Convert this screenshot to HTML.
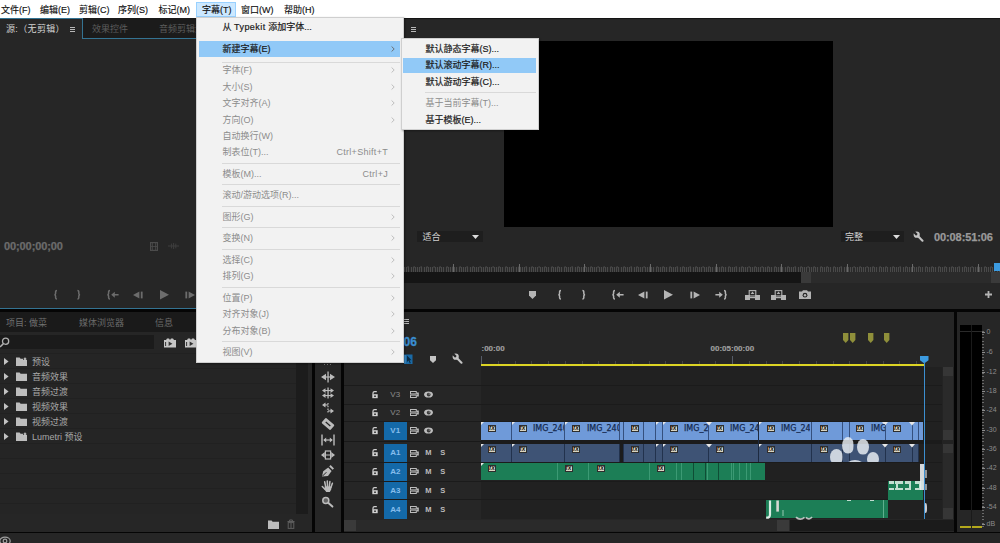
<!DOCTYPE html>
<html lang="zh-CN"><head><meta charset="utf-8"><title>Premiere</title>
<style>
html,body{margin:0;padding:0;background:#262626;}
body{width:1000px;height:543px;position:relative;overflow:hidden;font-family:"Liberation Sans","Noto Sans CJK SC",sans-serif;font-size:9px;color:#9d9d9d;}
.a{position:absolute}
.t{white-space:nowrap}
svg{position:absolute;overflow:visible}
</style></head><body>

<div class="a " style="left:0px;top:18px;width:1000px;height:525px;background:#262626;"></div>
<div class="a " style="left:0px;top:0px;width:1000px;height:18px;background:#ffffff;"></div>
<div class="a " style="left:196px;top:2px;width:40px;height:15px;background:#cce8ff;border:1px solid #99d1ff;box-sizing:border-box"></div>
<div class="a t" style="left:1px;top:4.0px;height:12px;line-height:12px;font-size:9px;color:#111;-webkit-text-stroke:0.15px #111">文件(F)</div>
<div class="a t" style="left:40px;top:4.0px;height:12px;line-height:12px;font-size:9px;color:#111;-webkit-text-stroke:0.15px #111">编辑(E)</div>
<div class="a t" style="left:79px;top:4.0px;height:12px;line-height:12px;font-size:9px;color:#111;-webkit-text-stroke:0.15px #111">剪辑(C)</div>
<div class="a t" style="left:118px;top:4.0px;height:12px;line-height:12px;font-size:9px;color:#111;-webkit-text-stroke:0.15px #111">序列(S)</div>
<div class="a t" style="left:158.5px;top:4.0px;height:12px;line-height:12px;font-size:9px;color:#111;-webkit-text-stroke:0.15px #111">标记(M)</div>
<div class="a t" style="left:202px;top:4.0px;height:12px;line-height:12px;font-size:9px;color:#111;-webkit-text-stroke:0.15px #111">字幕(T)</div>
<div class="a t" style="left:241px;top:4.0px;height:12px;line-height:12px;font-size:9px;color:#111;-webkit-text-stroke:0.15px #111">窗口(W)</div>
<div class="a t" style="left:284px;top:4.0px;height:12px;line-height:12px;font-size:9px;color:#111;-webkit-text-stroke:0.15px #111">帮助(H)</div>
<div class="a " style="left:82px;top:18px;width:322px;height:21px;background:#1b1b1b;"></div>
<div class="a " style="left:0px;top:18px;width:83px;height:1px;background:#347392;"></div>
<div class="a " style="left:82px;top:18px;width:1px;height:21px;background:#347392;"></div>
<div class="a " style="left:82px;top:38px;width:322px;height:1px;background:#347392;"></div>
<div class="a " style="left:0px;top:307.7px;width:404px;height:1.5px;background:#347392;"></div>
<div class="a t" style="left:6px;top:23.0px;height:12px;line-height:12px;font-size:9px;color:#d2d2d2;letter-spacing:0.35px">源:（无剪辑）</div>
<div class="a t" style="left:92px;top:23.0px;height:12px;line-height:12px;font-size:9px;color:#5c5c5c;">效果控件</div>
<div class="a t" style="left:159px;top:23.0px;height:12px;line-height:12px;font-size:9px;color:#5c5c5c;">音频剪辑混合器</div>
<div class="a t" style="left:4px;top:240.0px;height:12px;line-height:12px;font-size:11px;color:#6c6c6c;font-weight:bold;letter-spacing:-0.1px;-webkit-text-stroke:0.25px #6c6c6c">00;00;00;00</div>
<div class="a " style="left:404px;top:18px;width:596px;height:21px;background:#262626;"></div>
<div class="a " style="left:504px;top:41px;width:329px;height:186px;background:#000;"></div>
<div class="a " style="left:404px;top:18px;width:596px;height:1px;background:#141414;"></div>
<div class="a " style="left:417px;top:231px;width:66px;height:11px;background:#1e1e1e;"></div>
<div class="a t" style="left:422.5px;top:230.5px;height:12px;line-height:12px;font-size:9px;color:#d0d0d0;">适合</div>
<div class="a " style="left:841px;top:231px;width:63px;height:11px;background:#1e1e1e;"></div>
<div class="a t" style="left:845px;top:230.5px;height:12px;line-height:12px;font-size:9px;color:#d0d0d0;">完整</div>
<div class="a t" style="left:934px;top:230.5px;height:12px;line-height:12px;font-size:11px;color:#9a9a9a;font-weight:bold;letter-spacing:-0.1px;-webkit-text-stroke:0.25px #9a9a9a">00:08:51:06</div>
<div class="a " style="left:404px;top:271px;width:596px;height:12px;background:#151515;"></div>
<div class="a " style="left:803px;top:272px;width:197px;height:11px;background:#2b2b2b;"></div>
<div class="a " style="left:0px;top:309px;width:1000px;height:3px;background:#050505;"></div>
<div class="a " style="left:0px;top:312px;width:312px;height:220px;background:#262626;"></div>
<div class="a " style="left:0px;top:312px;width:312px;height:20px;background:#1a1a1a;"></div>
<div class="a t" style="left:6px;top:317.0px;height:12px;line-height:12px;font-size:9px;color:#707070;">项目: 做菜</div>
<div class="a t" style="left:79px;top:317.0px;height:12px;line-height:12px;font-size:9px;color:#6a6a6a;">媒体浏览器</div>
<div class="a t" style="left:155px;top:317.0px;height:12px;line-height:12px;font-size:9px;color:#6a6a6a;">信息</div>
<div class="a " style="left:0px;top:335px;width:154px;height:14px;background:#1b1b1b;"></div>
<div class="a " style="left:0px;top:350px;width:296px;height:164px;background:#252525;"></div>
<div class="a " style="left:0px;top:352.5px;width:296px;height:1px;background:#212121;"></div>
<div class="a " style="left:0px;top:367.5px;width:296px;height:1px;background:#212121;"></div>
<div class="a " style="left:0px;top:382.5px;width:296px;height:1px;background:#212121;"></div>
<div class="a " style="left:0px;top:397.5px;width:296px;height:1px;background:#212121;"></div>
<div class="a " style="left:0px;top:412.5px;width:296px;height:1px;background:#212121;"></div>
<div class="a " style="left:0px;top:427.5px;width:296px;height:1px;background:#212121;"></div>
<div class="a " style="left:0px;top:442.5px;width:296px;height:1px;background:#212121;"></div>
<div class="a " style="left:0px;top:457.5px;width:296px;height:1px;background:#212121;"></div>
<div class="a " style="left:0px;top:472.5px;width:296px;height:1px;background:#212121;"></div>
<div class="a " style="left:0px;top:487.5px;width:296px;height:1px;background:#212121;"></div>
<div class="a " style="left:0px;top:502.5px;width:296px;height:1px;background:#212121;"></div>
<div class="a " style="left:296px;top:350px;width:11.5px;height:164px;background:#1c1c1c;"></div>
<div class="a t" style="left:32px;top:356.0px;height:12px;line-height:12px;font-size:9px;color:#a8a8a8;">预设</div>
<div class="a t" style="left:32px;top:371.0px;height:12px;line-height:12px;font-size:9px;color:#a8a8a8;">音频效果</div>
<div class="a t" style="left:32px;top:386.0px;height:12px;line-height:12px;font-size:9px;color:#a8a8a8;">音频过渡</div>
<div class="a t" style="left:32px;top:401.0px;height:12px;line-height:12px;font-size:9px;color:#a8a8a8;">视频效果</div>
<div class="a t" style="left:32px;top:416.0px;height:12px;line-height:12px;font-size:9px;color:#a8a8a8;">视频过渡</div>
<div class="a t" style="left:32px;top:431.0px;height:12px;line-height:12px;font-size:9px;color:#a8a8a8;">Lumetri 预设</div>
<div class="a " style="left:312px;top:312px;width:3px;height:220px;background:#050505;"></div>
<div class="a " style="left:341px;top:312px;width:3px;height:220px;background:#050505;"></div>
<div class="a " style="left:954px;top:312px;width:3px;height:220px;background:#050505;"></div>
<div class="a " style="left:0px;top:532px;width:1000px;height:1px;background:#050505;"></div>
<div class="a " style="left:344px;top:312px;width:610px;height:220px;background:#262626;"></div>
<div class="a t" style="left:403.5px;top:336.0px;height:12px;line-height:12px;font-size:12px;color:#3a8dd0;font-weight:bold;-webkit-text-stroke:0.3px #3a8dd0">06</div>
<div class="a t" style="left:481.5px;top:343.3px;height:12px;line-height:12px;font-size:8px;color:#a0a0a0;font-weight:bold;-webkit-text-stroke:0.15px #a0a0a0">:00:00</div>
<div class="a t" style="left:710.5px;top:343.3px;height:12px;line-height:12px;font-size:8px;color:#a0a0a0;font-weight:bold;-webkit-text-stroke:0.15px #a0a0a0">00:05:00:00</div>
<div class="a " style="left:481px;top:364px;width:443px;height:2px;background:#dcd424;"></div>
<div class="a " style="left:957px;top:312px;width:43px;height:220px;background:#262626;"></div>
<div class="a " style="left:960px;top:325px;width:22px;height:185px;background:#000;"></div>
<div class="a " style="left:344px;top:367px;width:598px;height:152px;background:#1b1b1b;"></div>
<div class="a " style="left:344px;top:367px;width:137px;height:18px;background:#262626;"></div>
<div class="a " style="left:344px;top:439.5px;width:137px;height:4.5px;background:#262626;"></div>
<div class="a " style="left:344px;top:441px;width:137px;height:1.2px;background:#191919;"></div>
<div class="a " style="left:481px;top:367px;width:461px;height:18px;background:#212121;"></div>
<div class="a " style="left:344px;top:385.5px;width:137px;height:18.0px;background:#262626;"></div>
<div class="a " style="left:481px;top:385.5px;width:461px;height:18.0px;background:#212121;"></div>
<div class="a t" style="left:383.5px;top:388.8px;height:12px;line-height:12px;font-size:8px;color:#8c8c8c;width:23.5px;text-align:center;">V3</div>
<svg style="left:372px;top:390.8px" width="6" height="7.4" viewBox="0 0 6 7.4"><path d="M1 3.4 V1.9 Q1 0.7 2.6 0.7 H4.8" fill="none" stroke="#d0d0d0" stroke-width="1.2"/><rect x="0.3" y="3.2" width="5.4" height="4" fill="#d0d0d0"/><rect x="2" y="4.6" width="2" height="1.2" fill="#262626"/></svg>
<svg style="left:410px;top:391.0px" width="9" height="7" viewBox="0 0 9 7"><rect x="0.5" y="0.5" width="5.8" height="2.4" fill="none" stroke="#bcbcbc" stroke-width="1"/><rect x="0.5" y="4.1" width="5.8" height="2.4" fill="none" stroke="#bcbcbc" stroke-width="1"/><path d="M6.4 1.4 H8.8 V5.6 H6.4 L7.4 3.5 Z" fill="#bcbcbc"/></svg>
<svg style="left:424px;top:391.0px" width="9" height="7" viewBox="0 0 9 7"><ellipse cx="4.5" cy="3.5" rx="4.4" ry="3.1" fill="#bdbdbd"/><circle cx="4.7" cy="3.6" r="1.9" fill="#3a3a3a"/><circle cx="5.2" cy="3" r="0.7" fill="#9a9a9a"/></svg>
<div class="a " style="left:344px;top:404.5px;width:137px;height:16.5px;background:#262626;"></div>
<div class="a " style="left:481px;top:404.5px;width:461px;height:16.5px;background:#212121;"></div>
<div class="a t" style="left:383.5px;top:407.05px;height:12px;line-height:12px;font-size:8px;color:#8c8c8c;width:23.5px;text-align:center;">V2</div>
<svg style="left:372px;top:409.05px" width="6" height="7.4" viewBox="0 0 6 7.4"><path d="M1 3.4 V1.9 Q1 0.7 2.6 0.7 H4.8" fill="none" stroke="#d0d0d0" stroke-width="1.2"/><rect x="0.3" y="3.2" width="5.4" height="4" fill="#d0d0d0"/><rect x="2" y="4.6" width="2" height="1.2" fill="#262626"/></svg>
<svg style="left:410px;top:409.25px" width="9" height="7" viewBox="0 0 9 7"><rect x="0.5" y="0.5" width="5.8" height="2.4" fill="none" stroke="#bcbcbc" stroke-width="1"/><rect x="0.5" y="4.1" width="5.8" height="2.4" fill="none" stroke="#bcbcbc" stroke-width="1"/><path d="M6.4 1.4 H8.8 V5.6 H6.4 L7.4 3.5 Z" fill="#bcbcbc"/></svg>
<svg style="left:424px;top:409.25px" width="9" height="7" viewBox="0 0 9 7"><ellipse cx="4.5" cy="3.5" rx="4.4" ry="3.1" fill="#bdbdbd"/><circle cx="4.7" cy="3.6" r="1.9" fill="#3a3a3a"/><circle cx="5.2" cy="3" r="0.7" fill="#9a9a9a"/></svg>
<div class="a " style="left:344px;top:422px;width:137px;height:17.5px;background:#262626;"></div>
<div class="a " style="left:481px;top:422px;width:461px;height:17.5px;background:#212121;"></div>
<div class="a " style="left:383.5px;top:422px;width:23.5px;height:17.5px;background:#1469a8;"></div>
<div class="a t" style="left:383.5px;top:425.05px;height:12px;line-height:12px;font-size:8px;color:#86bdec;width:23.5px;text-align:center;font-weight:bold;">V1</div>
<svg style="left:372px;top:427.05px" width="6" height="7.4" viewBox="0 0 6 7.4"><path d="M1 3.4 V1.9 Q1 0.7 2.6 0.7 H4.8" fill="none" stroke="#d0d0d0" stroke-width="1.2"/><rect x="0.3" y="3.2" width="5.4" height="4" fill="#d0d0d0"/><rect x="2" y="4.6" width="2" height="1.2" fill="#262626"/></svg>
<svg style="left:410px;top:427.25px" width="9" height="7" viewBox="0 0 9 7"><rect x="0.5" y="0.5" width="5.8" height="2.4" fill="none" stroke="#bcbcbc" stroke-width="1"/><rect x="0.5" y="4.1" width="5.8" height="2.4" fill="none" stroke="#bcbcbc" stroke-width="1"/><path d="M6.4 1.4 H8.8 V5.6 H6.4 L7.4 3.5 Z" fill="#bcbcbc"/></svg>
<svg style="left:424px;top:427.25px" width="9" height="7" viewBox="0 0 9 7"><ellipse cx="4.5" cy="3.5" rx="4.4" ry="3.1" fill="#bdbdbd"/><circle cx="4.7" cy="3.6" r="1.9" fill="#3a3a3a"/><circle cx="5.2" cy="3" r="0.7" fill="#9a9a9a"/></svg>
<div class="a " style="left:344px;top:444px;width:137px;height:18px;background:#262626;"></div>
<div class="a " style="left:481px;top:444px;width:461px;height:18px;background:#212121;"></div>
<div class="a " style="left:383.5px;top:444px;width:23.5px;height:18px;background:#1469a8;"></div>
<div class="a t" style="left:383.5px;top:447.3px;height:12px;line-height:12px;font-size:8px;color:#86bdec;width:23.5px;text-align:center;font-weight:bold;">A1</div>
<svg style="left:372px;top:449.3px" width="6" height="7.4" viewBox="0 0 6 7.4"><path d="M1 3.4 V1.9 Q1 0.7 2.6 0.7 H4.8" fill="none" stroke="#d0d0d0" stroke-width="1.2"/><rect x="0.3" y="3.2" width="5.4" height="4" fill="#d0d0d0"/><rect x="2" y="4.6" width="2" height="1.2" fill="#262626"/></svg>
<svg style="left:410px;top:449.5px" width="9" height="7" viewBox="0 0 9 7"><rect x="0.5" y="0.5" width="5.8" height="2.4" fill="none" stroke="#bcbcbc" stroke-width="1"/><rect x="0.5" y="4.1" width="5.8" height="2.4" fill="none" stroke="#bcbcbc" stroke-width="1"/><path d="M6.4 1.4 H8.8 V5.6 H6.4 L7.4 3.5 Z" fill="#bcbcbc"/></svg>
<div class="a t" style="left:425.3px;top:447.3px;height:12px;line-height:12px;font-size:7.5px;color:#bcbcbc;font-weight:bold">M</div>
<div class="a t" style="left:440.2px;top:447.3px;height:12px;line-height:12px;font-size:7.5px;color:#bcbcbc;font-weight:bold">S</div>
<div class="a " style="left:344px;top:463px;width:137px;height:17.5px;background:#262626;"></div>
<div class="a " style="left:481px;top:463px;width:461px;height:17.5px;background:#212121;"></div>
<div class="a " style="left:383.5px;top:463px;width:23.5px;height:17.5px;background:#1469a8;"></div>
<div class="a t" style="left:383.5px;top:466.05px;height:12px;line-height:12px;font-size:8px;color:#86bdec;width:23.5px;text-align:center;font-weight:bold;">A2</div>
<svg style="left:372px;top:468.05px" width="6" height="7.4" viewBox="0 0 6 7.4"><path d="M1 3.4 V1.9 Q1 0.7 2.6 0.7 H4.8" fill="none" stroke="#d0d0d0" stroke-width="1.2"/><rect x="0.3" y="3.2" width="5.4" height="4" fill="#d0d0d0"/><rect x="2" y="4.6" width="2" height="1.2" fill="#262626"/></svg>
<svg style="left:410px;top:468.25px" width="9" height="7" viewBox="0 0 9 7"><rect x="0.5" y="0.5" width="5.8" height="2.4" fill="none" stroke="#bcbcbc" stroke-width="1"/><rect x="0.5" y="4.1" width="5.8" height="2.4" fill="none" stroke="#bcbcbc" stroke-width="1"/><path d="M6.4 1.4 H8.8 V5.6 H6.4 L7.4 3.5 Z" fill="#bcbcbc"/></svg>
<div class="a t" style="left:425.3px;top:466.05px;height:12px;line-height:12px;font-size:7.5px;color:#bcbcbc;font-weight:bold">M</div>
<div class="a t" style="left:440.2px;top:466.05px;height:12px;line-height:12px;font-size:7.5px;color:#bcbcbc;font-weight:bold">S</div>
<div class="a " style="left:344px;top:481.5px;width:137px;height:17.5px;background:#262626;"></div>
<div class="a " style="left:481px;top:481.5px;width:461px;height:17.5px;background:#212121;"></div>
<div class="a " style="left:383.5px;top:481.5px;width:23.5px;height:17.5px;background:#1469a8;"></div>
<div class="a t" style="left:383.5px;top:484.55px;height:12px;line-height:12px;font-size:8px;color:#86bdec;width:23.5px;text-align:center;font-weight:bold;">A3</div>
<svg style="left:372px;top:486.55px" width="6" height="7.4" viewBox="0 0 6 7.4"><path d="M1 3.4 V1.9 Q1 0.7 2.6 0.7 H4.8" fill="none" stroke="#d0d0d0" stroke-width="1.2"/><rect x="0.3" y="3.2" width="5.4" height="4" fill="#d0d0d0"/><rect x="2" y="4.6" width="2" height="1.2" fill="#262626"/></svg>
<svg style="left:410px;top:486.75px" width="9" height="7" viewBox="0 0 9 7"><rect x="0.5" y="0.5" width="5.8" height="2.4" fill="none" stroke="#bcbcbc" stroke-width="1"/><rect x="0.5" y="4.1" width="5.8" height="2.4" fill="none" stroke="#bcbcbc" stroke-width="1"/><path d="M6.4 1.4 H8.8 V5.6 H6.4 L7.4 3.5 Z" fill="#bcbcbc"/></svg>
<div class="a t" style="left:425.3px;top:484.55px;height:12px;line-height:12px;font-size:7.5px;color:#bcbcbc;font-weight:bold">M</div>
<div class="a t" style="left:440.2px;top:484.55px;height:12px;line-height:12px;font-size:7.5px;color:#bcbcbc;font-weight:bold">S</div>
<div class="a " style="left:344px;top:500px;width:137px;height:18.5px;background:#262626;"></div>
<div class="a " style="left:481px;top:500px;width:461px;height:18.5px;background:#212121;"></div>
<div class="a " style="left:383.5px;top:500px;width:23.5px;height:18.5px;background:#1469a8;"></div>
<div class="a t" style="left:383.5px;top:503.55px;height:12px;line-height:12px;font-size:8px;color:#86bdec;width:23.5px;text-align:center;font-weight:bold;">A4</div>
<svg style="left:372px;top:505.55px" width="6" height="7.4" viewBox="0 0 6 7.4"><path d="M1 3.4 V1.9 Q1 0.7 2.6 0.7 H4.8" fill="none" stroke="#d0d0d0" stroke-width="1.2"/><rect x="0.3" y="3.2" width="5.4" height="4" fill="#d0d0d0"/><rect x="2" y="4.6" width="2" height="1.2" fill="#262626"/></svg>
<svg style="left:410px;top:505.75px" width="9" height="7" viewBox="0 0 9 7"><rect x="0.5" y="0.5" width="5.8" height="2.4" fill="none" stroke="#bcbcbc" stroke-width="1"/><rect x="0.5" y="4.1" width="5.8" height="2.4" fill="none" stroke="#bcbcbc" stroke-width="1"/><path d="M6.4 1.4 H8.8 V5.6 H6.4 L7.4 3.5 Z" fill="#bcbcbc"/></svg>
<div class="a t" style="left:425.3px;top:503.55px;height:12px;line-height:12px;font-size:7.5px;color:#bcbcbc;font-weight:bold">M</div>
<div class="a t" style="left:440.2px;top:503.55px;height:12px;line-height:12px;font-size:7.5px;color:#bcbcbc;font-weight:bold">S</div>
<div class="a " style="left:404px;top:319px;width:5px;height:1px;background:#b8b8b8;"></div>
<div class="a " style="left:404px;top:321px;width:5px;height:1px;background:#b8b8b8;"></div>
<div class="a " style="left:404px;top:323px;width:5px;height:1px;background:#b8b8b8;"></div>
<svg style="left:404px;top:354px" width="9" height="11" viewBox="0 0 9 11"><rect x="0" y="0.5" width="8.5" height="9.5" fill="#1a6aa6"/><path d="M3 1.5 V8 L4.6 6.6 L5.8 9.4 L6.8 9 L5.6 6.3 H7.6 Z" fill="#0d2c44"/><path d="M1 1 V9.5" stroke="#5fb0ea" stroke-width="1"/></svg>
<svg style="left:430px;top:355.5px" width="6" height="7" viewBox="0 0 6 7"><path d="M0 0 H6 V4.2 L3 7 L0 4.2 Z" fill="#c4c4c4"/></svg>
<svg style="left:452px;top:353px" width="11" height="11" viewBox="0 0 11 11"><path d="M4.6 4.8 L9.5 9.7" stroke="#c4c4c4" stroke-width="2.1" stroke-linecap="round"/><circle cx="3.7" cy="3.7" r="3.1" fill="#c4c4c4"/><path d="M3.9 3.9 L-0.5 -0.5" stroke="#262626" stroke-width="2.3"/></svg>
<div class="a " style="left:481.0px;top:356px;width:1px;height:8px;background:#565c68;"></div>
<div class="a " style="left:497.5px;top:360.5px;width:1px;height:3.5px;background:#444444;"></div>
<div class="a " style="left:514.5px;top:360.5px;width:1px;height:3.5px;background:#444444;"></div>
<div class="a " style="left:531.0px;top:360.5px;width:1px;height:3.5px;background:#444444;"></div>
<div class="a " style="left:548.0px;top:360.5px;width:1px;height:3.5px;background:#444444;"></div>
<div class="a " style="left:564.5px;top:360.5px;width:1px;height:3.5px;background:#444444;"></div>
<div class="a " style="left:581.5px;top:360.5px;width:1px;height:3.5px;background:#444444;"></div>
<div class="a " style="left:598.0px;top:360.5px;width:1px;height:3.5px;background:#444444;"></div>
<div class="a " style="left:615.0px;top:360.5px;width:1px;height:3.5px;background:#444444;"></div>
<div class="a " style="left:631.5px;top:360.5px;width:1px;height:3.5px;background:#444444;"></div>
<div class="a " style="left:648.5px;top:360.5px;width:1px;height:3.5px;background:#444444;"></div>
<div class="a " style="left:665.0px;top:360.5px;width:1px;height:3.5px;background:#444444;"></div>
<div class="a " style="left:682.0px;top:360.5px;width:1px;height:3.5px;background:#444444;"></div>
<div class="a " style="left:698.5px;top:360.5px;width:1px;height:3.5px;background:#444444;"></div>
<div class="a " style="left:715.0px;top:360.5px;width:1px;height:3.5px;background:#444444;"></div>
<div class="a " style="left:732.0px;top:356px;width:1px;height:8px;background:#565c68;"></div>
<div class="a " style="left:748.5px;top:360.5px;width:1px;height:3.5px;background:#444444;"></div>
<div class="a " style="left:765.5px;top:360.5px;width:1px;height:3.5px;background:#444444;"></div>
<div class="a " style="left:782.0px;top:360.5px;width:1px;height:3.5px;background:#444444;"></div>
<div class="a " style="left:799.0px;top:360.5px;width:1px;height:3.5px;background:#444444;"></div>
<div class="a " style="left:815.5px;top:360.5px;width:1px;height:3.5px;background:#444444;"></div>
<div class="a " style="left:832.5px;top:360.5px;width:1px;height:3.5px;background:#444444;"></div>
<div class="a " style="left:849.0px;top:360.5px;width:1px;height:3.5px;background:#444444;"></div>
<div class="a " style="left:866.0px;top:360.5px;width:1px;height:3.5px;background:#444444;"></div>
<div class="a " style="left:882.5px;top:360.5px;width:1px;height:3.5px;background:#444444;"></div>
<div class="a " style="left:899.0px;top:360.5px;width:1px;height:3.5px;background:#444444;"></div>
<div class="a " style="left:916.0px;top:360.5px;width:1px;height:3.5px;background:#444444;"></div>
<svg style="left:843px;top:333px" width="5.4" height="10" viewBox="0 0 6 10" preserveAspectRatio="none"><path d="M0 0 H6 V7 L3 10 L0 7 Z" fill="#8f8f3a"/></svg>
<svg style="left:850px;top:333px" width="5.4" height="10" viewBox="0 0 6 10" preserveAspectRatio="none"><path d="M0 0 H6 V7 L3 10 L0 7 Z" fill="#8f8f3a"/></svg>
<svg style="left:868px;top:333px" width="5.4" height="10" viewBox="0 0 6 10" preserveAspectRatio="none"><path d="M0 0 H6 V7 L3 10 L0 7 Z" fill="#8f8f3a"/></svg>
<svg style="left:883.5px;top:333px" width="5.4" height="10" viewBox="0 0 6 10" preserveAspectRatio="none"><path d="M0 0 H6 V7 L3 10 L0 7 Z" fill="#8f8f3a"/></svg>
<div class="a " style="left:481px;top:422px;width:441.5px;height:18px;background:#6f9ad9;"></div>
<div class="a " style="left:481px;top:443.5px;width:437px;height:18.5px;background:#3e5375;"></div>
<div class="a " style="left:619.5px;top:443.5px;width:4.0px;height:18.5px;background:#1c1c1c;"></div>
<div class="a " style="left:510.8px;top:422px;width:1px;height:18px;background:#35507e;"></div>
<div class="a " style="left:510.8px;top:443.5px;width:1px;height:18.5px;background:#22324d;"></div>
<div class="a " style="left:564.3px;top:422px;width:1px;height:18px;background:#35507e;"></div>
<div class="a " style="left:564.3px;top:443.5px;width:1px;height:18.5px;background:#22324d;"></div>
<div class="a " style="left:618.9px;top:422px;width:1px;height:18px;background:#35507e;"></div>
<div class="a " style="left:618.9px;top:443.5px;width:1px;height:18.5px;background:#22324d;"></div>
<div class="a " style="left:623.0px;top:422px;width:1px;height:18px;background:#35507e;"></div>
<div class="a " style="left:623.0px;top:443.5px;width:1px;height:18.5px;background:#22324d;"></div>
<div class="a " style="left:643.0px;top:422px;width:1px;height:18px;background:#35507e;"></div>
<div class="a " style="left:643.0px;top:443.5px;width:1px;height:18.5px;background:#22324d;"></div>
<div class="a " style="left:654.9px;top:422px;width:1px;height:18px;background:#35507e;"></div>
<div class="a " style="left:654.9px;top:443.5px;width:1px;height:18.5px;background:#22324d;"></div>
<div class="a " style="left:662.0px;top:422px;width:1px;height:18px;background:#35507e;"></div>
<div class="a " style="left:662.0px;top:443.5px;width:1px;height:18.5px;background:#22324d;"></div>
<div class="a " style="left:708.0px;top:422px;width:1px;height:18px;background:#35507e;"></div>
<div class="a " style="left:708.0px;top:443.5px;width:1px;height:18.5px;background:#22324d;"></div>
<div class="a " style="left:758.3px;top:422px;width:1px;height:18px;background:#35507e;"></div>
<div class="a " style="left:758.3px;top:443.5px;width:1px;height:18.5px;background:#22324d;"></div>
<div class="a " style="left:811.4px;top:422px;width:1px;height:18px;background:#35507e;"></div>
<div class="a " style="left:811.4px;top:443.5px;width:1px;height:18.5px;background:#22324d;"></div>
<div class="a " style="left:842.3px;top:422px;width:1px;height:18px;background:#35507e;"></div>
<div class="a " style="left:842.3px;top:443.5px;width:1px;height:18.5px;background:#22324d;"></div>
<div class="a " style="left:849.3px;top:422px;width:1px;height:18px;background:#35507e;"></div>
<div class="a " style="left:849.3px;top:443.5px;width:1px;height:18.5px;background:#22324d;"></div>
<div class="a " style="left:884.9px;top:422px;width:1px;height:18px;background:#35507e;"></div>
<div class="a " style="left:884.9px;top:443.5px;width:1px;height:18.5px;background:#22324d;"></div>
<div class="a " style="left:911.5px;top:422px;width:1px;height:18px;background:#35507e;"></div>
<div class="a " style="left:911.5px;top:443.5px;width:1px;height:18.5px;background:#22324d;"></div>
<div class="a " style="left:917.5px;top:422px;width:1px;height:18px;background:#35507e;"></div>
<div class="a " style="left:917.5px;top:443.5px;width:1px;height:18.5px;background:#22324d;"></div>
<div class="a " style="left:758.3px;top:422px;width:1.2px;height:40px;background:#1d2a40;"></div>
<div class="a " style="left:481px;top:463px;width:284px;height:17px;background:#1c7e56;"></div>
<div class="a " style="left:557.0px;top:463px;width:1px;height:17px;background:#3c9a74;"></div>
<div class="a " style="left:588.0px;top:463px;width:1px;height:17px;background:#3c9a74;"></div>
<div class="a " style="left:648.9px;top:463px;width:1px;height:17px;background:#3c9a74;"></div>
<div class="a " style="left:675.5px;top:463px;width:1px;height:17px;background:#3c9a74;"></div>
<div class="a " style="left:680.5px;top:463px;width:1px;height:17px;background:#3c9a74;"></div>
<div class="a " style="left:692.5px;top:463px;width:1px;height:17px;background:#3c9a74;"></div>
<div class="a " style="left:705.1px;top:463px;width:1px;height:17px;background:#3c9a74;"></div>
<div class="a " style="left:707.0px;top:463px;width:1px;height:17px;background:#3c9a74;"></div>
<div class="a " style="left:717.5px;top:463px;width:1px;height:17px;background:#3c9a74;"></div>
<div class="a " style="left:730.5px;top:463px;width:1px;height:17px;background:#3c9a74;"></div>
<div class="a " style="left:733.0px;top:463px;width:1px;height:17px;background:#3c9a74;"></div>
<div class="a " style="left:738.5px;top:463px;width:1px;height:17px;background:#3c9a74;"></div>
<div class="a " style="left:745.5px;top:463px;width:1px;height:17px;background:#3c9a74;"></div>
<div class="a " style="left:749.5px;top:463px;width:1px;height:17px;background:#3c9a74;"></div>
<div class="a " style="left:692.5px;top:463px;width:1px;height:17px;background:#0f4d35;"></div>
<div class="a " style="left:705.1px;top:463px;width:1px;height:17px;background:#0f4d35;"></div>
<div class="a " style="left:717.5px;top:463px;width:1px;height:17px;background:#0f4d35;"></div>
<div class="a " style="left:887.5px;top:480.5px;width:35.5px;height:19.0px;background:#1c7e56;"></div>
<div class="a " style="left:765.5px;top:500px;width:122.5px;height:17.5px;background:#1c7e56;"></div>
<div class="a t" style="left:488px;top:424.5px;width:8px;height:7px;box-sizing:border-box;border:1px solid #2e2e2e;background:#d9d4c0;color:#1a1a1a;font-size:6.5px;line-height:4.5px;text-align:center;font-style:italic;font-weight:bold;overflow:hidden">fx</div>
<div class="a t" style="left:518.5px;top:424.5px;width:8px;height:7px;box-sizing:border-box;border:1px solid #2e2e2e;background:#d9d4c0;color:#1a1a1a;font-size:6.5px;line-height:4.5px;text-align:center;font-style:italic;font-weight:bold;overflow:hidden">fx</div>
<div class="a t" style="left:572px;top:424.5px;width:8px;height:7px;box-sizing:border-box;border:1px solid #2e2e2e;background:#d9d4c0;color:#1a1a1a;font-size:6.5px;line-height:4.5px;text-align:center;font-style:italic;font-weight:bold;overflow:hidden">fx</div>
<div class="a t" style="left:631px;top:424.5px;width:8px;height:7px;box-sizing:border-box;border:1px solid #2e2e2e;background:#d9d4c0;color:#1a1a1a;font-size:6.5px;line-height:4.5px;text-align:center;font-style:italic;font-weight:bold;overflow:hidden">fx</div>
<div class="a t" style="left:669.6px;top:424.5px;width:8px;height:7px;box-sizing:border-box;border:1px solid #2e2e2e;background:#d9d4c0;color:#1a1a1a;font-size:6.5px;line-height:4.5px;text-align:center;font-style:italic;font-weight:bold;overflow:hidden">fx</div>
<div class="a t" style="left:715.6px;top:424.5px;width:8px;height:7px;box-sizing:border-box;border:1px solid #2e2e2e;background:#d9d4c0;color:#1a1a1a;font-size:6.5px;line-height:4.5px;text-align:center;font-style:italic;font-weight:bold;overflow:hidden">fx</div>
<div class="a t" style="left:767px;top:424.5px;width:8px;height:7px;box-sizing:border-box;border:1px solid #2e2e2e;background:#d9d4c0;color:#1a1a1a;font-size:6.5px;line-height:4.5px;text-align:center;font-style:italic;font-weight:bold;overflow:hidden">fx</div>
<div class="a t" style="left:820px;top:424.5px;width:8px;height:7px;box-sizing:border-box;border:1px solid #2e2e2e;background:#d9d4c0;color:#1a1a1a;font-size:6.5px;line-height:4.5px;text-align:center;font-style:italic;font-weight:bold;overflow:hidden">fx</div>
<div class="a t" style="left:856px;top:424.5px;width:8px;height:7px;box-sizing:border-box;border:1px solid #2e2e2e;background:#d9d4c0;color:#1a1a1a;font-size:6.5px;line-height:4.5px;text-align:center;font-style:italic;font-weight:bold;overflow:hidden">fx</div>
<div class="a t" style="left:893px;top:424.5px;width:8px;height:7px;box-sizing:border-box;border:1px solid #2e2e2e;background:#d9d4c0;color:#1a1a1a;font-size:6.5px;line-height:4.5px;text-align:center;font-style:italic;font-weight:bold;overflow:hidden">fx</div>
<div class="a t" style="left:488px;top:445.5px;width:8px;height:7px;box-sizing:border-box;border:1px solid #2e2e2e;background:#d9d4c0;color:#1a1a1a;font-size:6.5px;line-height:4.5px;text-align:center;font-style:italic;font-weight:bold;overflow:hidden">fx</div>
<div class="a t" style="left:518.5px;top:445.5px;width:8px;height:7px;box-sizing:border-box;border:1px solid #2e2e2e;background:#d9d4c0;color:#1a1a1a;font-size:6.5px;line-height:4.5px;text-align:center;font-style:italic;font-weight:bold;overflow:hidden">fx</div>
<div class="a t" style="left:572px;top:445.5px;width:8px;height:7px;box-sizing:border-box;border:1px solid #2e2e2e;background:#d9d4c0;color:#1a1a1a;font-size:6.5px;line-height:4.5px;text-align:center;font-style:italic;font-weight:bold;overflow:hidden">fx</div>
<div class="a t" style="left:631px;top:445.5px;width:8px;height:7px;box-sizing:border-box;border:1px solid #2e2e2e;background:#d9d4c0;color:#1a1a1a;font-size:6.5px;line-height:4.5px;text-align:center;font-style:italic;font-weight:bold;overflow:hidden">fx</div>
<div class="a t" style="left:669.6px;top:445.5px;width:8px;height:7px;box-sizing:border-box;border:1px solid #2e2e2e;background:#d9d4c0;color:#1a1a1a;font-size:6.5px;line-height:4.5px;text-align:center;font-style:italic;font-weight:bold;overflow:hidden">fx</div>
<div class="a t" style="left:715.6px;top:445.5px;width:8px;height:7px;box-sizing:border-box;border:1px solid #2e2e2e;background:#d9d4c0;color:#1a1a1a;font-size:6.5px;line-height:4.5px;text-align:center;font-style:italic;font-weight:bold;overflow:hidden">fx</div>
<div class="a t" style="left:767px;top:445.5px;width:8px;height:7px;box-sizing:border-box;border:1px solid #2e2e2e;background:#d9d4c0;color:#1a1a1a;font-size:6.5px;line-height:4.5px;text-align:center;font-style:italic;font-weight:bold;overflow:hidden">fx</div>
<div class="a t" style="left:820px;top:445.5px;width:8px;height:7px;box-sizing:border-box;border:1px solid #2e2e2e;background:#d9d4c0;color:#1a1a1a;font-size:6.5px;line-height:4.5px;text-align:center;font-style:italic;font-weight:bold;overflow:hidden">fx</div>
<div class="a t" style="left:893px;top:445.5px;width:8px;height:7px;box-sizing:border-box;border:1px solid #2e2e2e;background:#d9d4c0;color:#1a1a1a;font-size:6.5px;line-height:4.5px;text-align:center;font-style:italic;font-weight:bold;overflow:hidden">fx</div>
<div class="a t" style="left:488px;top:465px;width:8px;height:7px;box-sizing:border-box;border:1px solid #2e2e2e;background:#d9d4c0;color:#1a1a1a;font-size:6.5px;line-height:4.5px;text-align:center;font-style:italic;font-weight:bold;overflow:hidden">fx</div>
<div class="a t" style="left:564.5px;top:465px;width:8px;height:7px;box-sizing:border-box;border:1px solid #2e2e2e;background:#d9d4c0;color:#1a1a1a;font-size:6.5px;line-height:4.5px;text-align:center;font-style:italic;font-weight:bold;overflow:hidden">fx</div>
<div class="a t" style="left:597px;top:465px;width:8px;height:7px;box-sizing:border-box;border:1px solid #2e2e2e;background:#d9d4c0;color:#1a1a1a;font-size:6.5px;line-height:4.5px;text-align:center;font-style:italic;font-weight:bold;overflow:hidden">fx</div>
<div class="a t" style="left:656.6px;top:465px;width:8px;height:7px;box-sizing:border-box;border:1px solid #2e2e2e;background:#d9d4c0;color:#1a1a1a;font-size:6.5px;line-height:4.5px;text-align:center;font-style:italic;font-weight:bold;overflow:hidden">fx</div>
<svg style="left:481px;top:422px" width="3" height="3" viewBox="0 0 3 3"><path d="M0 0 H3 L0 3 Z" fill="#e8e8e8"/></svg>
<svg style="left:511.5px;top:422px" width="3" height="3" viewBox="0 0 3 3"><path d="M0 0 H3 L0 3 Z" fill="#e8e8e8"/></svg>
<svg style="left:565px;top:422px" width="3" height="3" viewBox="0 0 3 3"><path d="M0 0 H3 L0 3 Z" fill="#e8e8e8"/></svg>
<svg style="left:655.5px;top:422px" width="3" height="3" viewBox="0 0 3 3"><path d="M0 0 H3 L0 3 Z" fill="#e8e8e8"/></svg>
<svg style="left:662.5px;top:422px" width="3" height="3" viewBox="0 0 3 3"><path d="M0 0 H3 L0 3 Z" fill="#e8e8e8"/></svg>
<svg style="left:759px;top:422px" width="3" height="3" viewBox="0 0 3 3"><path d="M0 0 H3 L0 3 Z" fill="#e8e8e8"/></svg>
<svg style="left:481px;top:443.5px" width="3" height="3" viewBox="0 0 3 3"><path d="M0 0 H3 L0 3 Z" fill="#e8e8e8"/></svg>
<svg style="left:511.5px;top:443.5px" width="3" height="3" viewBox="0 0 3 3"><path d="M0 0 H3 L0 3 Z" fill="#e8e8e8"/></svg>
<svg style="left:655.5px;top:443.5px" width="3" height="3" viewBox="0 0 3 3"><path d="M0 0 H3 L0 3 Z" fill="#e8e8e8"/></svg>
<svg style="left:662.5px;top:443.5px" width="3" height="3" viewBox="0 0 3 3"><path d="M0 0 H3 L0 3 Z" fill="#e8e8e8"/></svg>
<svg style="left:759px;top:443.5px" width="3" height="3" viewBox="0 0 3 3"><path d="M0 0 H3 L0 3 Z" fill="#e8e8e8"/></svg>
<svg style="left:481px;top:463px" width="3" height="3" viewBox="0 0 3 3"><path d="M0 0 H3 L0 3 Z" fill="#e8e8e8"/></svg>
<svg style="left:705.5px;top:422px" width="6" height="4" viewBox="0 0 6 4"><path d="M0 0 H6 L3 3.6 Z" fill="#e8e8e8"/></svg>
<svg style="left:705.5px;top:443.5px" width="6" height="4" viewBox="0 0 6 4"><path d="M0 0 H6 L3 3.6 Z" fill="#e8e8e8"/></svg>
<svg style="left:909px;top:422px" width="6" height="4" viewBox="0 0 6 4"><path d="M0 0 H6 L3 3.6 Z" fill="#e8e8e8"/></svg>
<svg style="left:909px;top:443.5px" width="6" height="4" viewBox="0 0 6 4"><path d="M0 0 H6 L3 3.6 Z" fill="#e8e8e8"/></svg>
<svg style="left:882.4px;top:422px" width="6" height="4" viewBox="0 0 6 4"><path d="M0 0 H6 L3 3.6 Z" fill="#e8e8e8"/></svg>
<svg style="left:882.4px;top:443.5px" width="6" height="4" viewBox="0 0 6 4"><path d="M0 0 H6 L3 3.6 Z" fill="#e8e8e8"/></svg>
<div class="a t" style="left:533px;top:424.3px;width:31px;height:10px;line-height:10px;font-size:8px;-webkit-text-stroke:0.25px #15294f;color:#15294f;font-family:'DejaVu Sans','Liberation Sans',sans-serif;overflow:hidden;">IMG_2407</div>
<div class="a t" style="left:587px;top:424.3px;width:32px;height:10px;line-height:10px;font-size:8px;-webkit-text-stroke:0.25px #15294f;color:#15294f;font-family:'DejaVu Sans','Liberation Sans',sans-serif;overflow:hidden;">IMG_2408</div>
<div class="a t" style="left:684px;top:424.3px;width:24px;height:10px;line-height:10px;font-size:8px;-webkit-text-stroke:0.25px #15294f;color:#15294f;font-family:'DejaVu Sans','Liberation Sans',sans-serif;overflow:hidden;">IMG_2410</div>
<div class="a t" style="left:730px;top:424.3px;width:28px;height:10px;line-height:10px;font-size:8px;-webkit-text-stroke:0.25px #15294f;color:#15294f;font-family:'DejaVu Sans','Liberation Sans',sans-serif;overflow:hidden;">IMG_2411</div>
<div class="a t" style="left:781px;top:424.3px;width:29px;height:10px;line-height:10px;font-size:8px;-webkit-text-stroke:0.25px #15294f;color:#15294f;font-family:'DejaVu Sans','Liberation Sans',sans-serif;overflow:hidden;">IMG_2412</div>
<div class="a t" style="left:871px;top:424.3px;width:14px;height:10px;line-height:10px;font-size:8px;-webkit-text-stroke:0.25px #15294f;color:#15294f;font-family:'DejaVu Sans','Liberation Sans',sans-serif;overflow:hidden;">IMG_2415</div>
<div class="a" style="left:841.5px;top:436.5px;width:12px;height:17.0px;border-radius:50%;background:rgba(235,240,245,.82);clip-path:inset(0 0 0px 0)"></div>
<div class="a" style="left:857px;top:438.5px;width:12px;height:16px;border-radius:50%;background:rgba(235,240,245,.82);clip-path:inset(0 0 0px 0)"></div>
<div class="a" style="left:829.5px;top:449px;width:13.0px;height:16px;border-radius:50%;background:rgba(235,240,245,.82);clip-path:inset(0 0 3px 0)"></div>
<div class="a" style="left:867px;top:452px;width:12px;height:14px;border-radius:50%;background:rgba(235,240,245,.82);clip-path:inset(0 0 4px 0)"></div>
<div class="a" style="left:845.5px;top:460px;width:18px;height:12px;border-radius:50%;background:rgba(235,240,245,.82);clip-path:inset(0 0 10px 0)"></div>
<div class="a " style="left:888.6px;top:481.4px;width:5.199999999999932px;height:2.6px;background:rgba(225,240,232,.85);"></div>
<div class="a " style="left:888.6px;top:487.9px;width:5.199999999999932px;height:2.6px;background:rgba(225,240,232,.85);"></div>
<div class="a " style="left:895.4px;top:481.4px;width:7.600000000000023px;height:2.6px;background:rgba(225,240,232,.85);"></div>
<div class="a " style="left:895.4px;top:487.9px;width:7.600000000000023px;height:2.6px;background:rgba(225,240,232,.85);"></div>
<div class="a " style="left:905px;top:481.4px;width:6px;height:2.6px;background:rgba(225,240,232,.85);"></div>
<div class="a " style="left:905px;top:487.9px;width:6px;height:2.6px;background:rgba(225,240,232,.85);"></div>
<div class="a " style="left:914.8px;top:481.4px;width:5.800000000000068px;height:2.6px;background:rgba(225,240,232,.85);"></div>
<div class="a " style="left:914.8px;top:487.9px;width:5.800000000000068px;height:2.6px;background:rgba(225,240,232,.85);"></div>
<div class="a " style="left:896px;top:483.5px;width:2px;height:4.5px;background:rgba(225,240,232,.85);"></div>
<div class="a " style="left:909px;top:483.5px;width:2px;height:4.5px;background:rgba(225,240,232,.85);"></div>
<div class="a " style="left:918.5px;top:483.5px;width:2px;height:4.5px;background:rgba(225,240,232,.85);"></div>
<div class="a " style="left:920px;top:463.5px;width:4px;height:26.5px;background:rgba(232,236,240,.9);"></div>
<div class="a " style="left:925px;top:470px;width:1.5px;height:8px;background:rgba(220,225,230,.6);"></div>
<div class="a " style="left:925px;top:484px;width:1.5px;height:6px;background:rgba(220,225,230,.6);"></div>
<div class="a " style="left:882.6px;top:500px;width:1px;height:17.5px;background:#5fb08e;"></div>
<svg style="left:765px;top:500px" width="50" height="21" viewBox="0 0 50 21"><path d="M5 0.5 V14.5 Q5 18 1.2 17.6" fill="none" stroke="rgba(235,245,240,.92)" stroke-width="2.2"/><path d="M12.6 0.5 V11.6" stroke="rgba(235,225,225,.9)" stroke-width="2.6"/><path d="M18 10 V16" stroke="rgba(200,230,215,.45)" stroke-width="1.6"/><path d="M31 17.2 Q35 21 39.5 17.4 M41 17.4 Q44 20.6 47 17" fill="none" stroke="rgba(225,225,225,.8)" stroke-width="1.8"/></svg>
<div class="a " style="left:847px;top:499.5px;width:4px;height:1.6px;background:rgba(235,245,240,.8);"></div>
<div class="a " style="left:870px;top:499.5px;width:4px;height:1.6px;background:rgba(235,245,240,.8);"></div>
<div class="a" style="left:923.5px;top:503px;width:3.5px;height:10px;border-radius:50%;background:rgba(235,235,240,.85)"></div>
<svg style="left:920px;top:355.5px" width="9" height="8" viewBox="0 0 9 8"><path d="M0 0 H8.5 V4.2 L4.25 7.5 L0 4.2 Z" fill="#3c9be0"/></svg>
<div class="a " style="left:924px;top:362px;width:1px;height:157px;background:#3c8fd0;"></div>
<div class="a " style="left:942px;top:367px;width:12px;height:152px;background:#232323;"></div>
<div class="a " style="left:943px;top:367px;width:9.5px;height:73px;background:#2a2a2a;"></div>
<div class="a " style="left:943px;top:443.5px;width:9.5px;height:75.5px;background:#2a2a2a;"></div>
<div class="a " style="left:943px;top:367px;width:9.5px;height:9px;background:#363636;"></div>
<div class="a " style="left:943px;top:430px;width:9.5px;height:10px;background:#363636;"></div>
<div class="a " style="left:943px;top:443.5px;width:9.5px;height:9.5px;background:#363636;"></div>
<div class="a " style="left:943px;top:508px;width:9.5px;height:11px;background:#363636;"></div>
<div class="a " style="left:344px;top:520px;width:610px;height:11px;background:#1b1b1b;"></div>
<div class="a " style="left:344px;top:520px;width:446px;height:11px;background:#2a2a2a;"></div>
<div class="a " style="left:344px;top:520px;width:12px;height:11px;background:#3a3a3a;"></div>
<div class="a " style="left:777px;top:520px;width:12px;height:11px;background:#3a3a3a;"></div>
<div class="a " style="left:315px;top:312px;width:26px;height:220px;background:#262626;"></div>
<svg style="left:320.5px;top:371.0px" width="14" height="12" viewBox="0 0 14 12"><path d="M0 6 L5 2.8 V9.2 Z M14 6 L9 2.8 V9.2 Z" fill="#bcbcbc"/><rect x="6.4" y="0.5" width="1.3" height="11" fill="#bcbcbc"/><rect x="3" y="5.4" width="8" height="1.2" fill="#bcbcbc"/></svg>
<svg style="left:320.5px;top:386.5px" width="14" height="12" viewBox="0 0 14 12"><path d="M1 3.6 L4.5 1.2 V6 Z M13 3.6 L9.5 1.2 V6 Z M1 8.6 L4.5 6.2 V11 Z M13 8.6 L9.5 6.2 V11 Z" fill="#bcbcbc"/><rect x="6.4" y="0.5" width="1.3" height="11" fill="#bcbcbc"/><rect x="3" y="3" width="8" height="1.1" fill="#bcbcbc"/><rect x="3" y="8" width="8" height="1.1" fill="#bcbcbc"/></svg>
<svg style="left:320.5px;top:402.0px" width="14" height="12" viewBox="0 0 14 12"><path d="M1 3 L4.5 0.6 V5.4 Z M13 9 L9.5 6.6 V11.4 Z" fill="#bcbcbc"/><rect x="4" y="2.4" width="3" height="1.1" fill="#bcbcbc"/><rect x="7" y="8.4" width="3" height="1.1" fill="#bcbcbc"/><path d="M7 1 V11" stroke="#bcbcbc" stroke-width="1.2" stroke-dasharray="1.5 1.2"/></svg>
<svg style="left:320.5px;top:418.0px" width="14" height="12" viewBox="0 0 14 12"><g transform="rotate(40 7 6)"><rect x="1.2" y="2.6" width="11.6" height="6.8" rx="1" fill="#bcbcbc"/><rect x="4" y="5.3" width="6" height="1.3" fill="#262626"/></g></svg>
<svg style="left:320.5px;top:433.5px" width="14" height="12" viewBox="0 0 14 12"><rect x="0.3" y="0.5" width="1.4" height="11" fill="#bcbcbc"/><rect x="12.3" y="0.5" width="1.4" height="11" fill="#bcbcbc"/><rect x="3" y="5.4" width="8" height="1.2" fill="#bcbcbc"/><path d="M2.2 6 L5.2 3.6 V8.4 Z M11.8 6 L8.8 3.6 V8.4 Z" fill="#bcbcbc"/></svg>
<svg style="left:320.5px;top:449.0px" width="14" height="12" viewBox="0 0 14 12"><rect x="4.4" y="2" width="5.2" height="8" fill="none" stroke="#bcbcbc" stroke-width="1.2"/><rect x="4.4" y="5.5" width="5.2" height="1" fill="#bcbcbc"/><path d="M0 6 L3.8 3 V9 Z M14 6 L10.2 3 V9 Z" fill="#bcbcbc"/></svg>
<svg style="left:320.5px;top:464.5px" width="14" height="12" viewBox="0 0 14 12"><path d="M1 11.5 L2.2 6.2 L7.2 2.6 L10.6 6 L7 11 Z" fill="#bcbcbc"/><path d="M8.2 1.4 L9.6 0 L13 3.4 L11.6 4.8 Z" fill="#bcbcbc"/><path d="M1.4 11.2 L5.4 7.2" stroke="#262626" stroke-width="1"/></svg>
<svg style="left:320.5px;top:480.0px" width="14" height="12" viewBox="0 0 14 12"><g stroke="#bcbcbc" stroke-width="1.5" stroke-linecap="round"><path d="M4.7 7 L3.7 1.8"/><path d="M6.5 6.5 L6.3 0.9"/><path d="M8.3 6.8 L8.9 1.5"/><path d="M9.9 7.6 L11.4 3.2"/><path d="M4.2 9.6 L1.3 6.6"/></g><path d="M3.8 6.2 L10.6 6.4 L10.2 9.6 L8.8 12 H5.2 L3.6 9.6 Z" fill="#bcbcbc"/></svg>
<svg style="left:320.5px;top:495.5px" width="14" height="12" viewBox="0 0 14 12"><circle cx="4.8" cy="4.4" r="3" fill="#666" stroke="#bcbcbc" stroke-width="1.5"/><path d="M7.4 7 L11.4 10.6" stroke="#bcbcbc" stroke-width="2" stroke-linecap="round"/></svg>
<div class="a " style="left:324px;top:364px;width:1px;height:1px;background:#7a7a7a;"></div>
<div class="a " style="left:327px;top:364px;width:1px;height:1px;background:#7a7a7a;"></div>
<div class="a " style="left:330px;top:364px;width:1px;height:1px;background:#7a7a7a;"></div>
<div class="a " style="left:960px;top:330.5px;width:22px;height:1px;background:#2a2a2a;"></div>
<div class="a " style="left:971px;top:325px;width:1px;height:201px;background:#1a1a1a;"></div>
<div class="a " style="left:960px;top:526px;width:10.5px;height:2px;background:#b3a81c;"></div>
<div class="a " style="left:972px;top:526px;width:10px;height:2px;background:#b3a81c;"></div>
<div class="a" style="left:982px;top:331px;width:2px;height:196px;background:repeating-linear-gradient(to bottom,#6a6a6a 0,#6a6a6a 1px,transparent 1px,transparent 3.25px)"></div>
<div class="a " style="left:982px;top:332px;width:3px;height:1px;background:#8c8c8c;"></div>
<div class="a t" style="left:986.5px;top:326.0px;height:12px;line-height:12px;font-size:7px;color:#8c8c8c;">0</div>
<div class="a " style="left:982px;top:352px;width:3px;height:1px;background:#8c8c8c;"></div>
<div class="a t" style="left:986.5px;top:346.0px;height:12px;line-height:12px;font-size:7px;color:#8c8c8c;">-6</div>
<div class="a " style="left:982px;top:371.5px;width:3px;height:1px;background:#8c8c8c;"></div>
<div class="a t" style="left:986.5px;top:365.5px;height:12px;line-height:12px;font-size:7px;color:#8c8c8c;">-12</div>
<div class="a " style="left:982px;top:391px;width:3px;height:1px;background:#8c8c8c;"></div>
<div class="a t" style="left:986.5px;top:385.0px;height:12px;line-height:12px;font-size:7px;color:#8c8c8c;">-18</div>
<div class="a " style="left:982px;top:410px;width:3px;height:1px;background:#8c8c8c;"></div>
<div class="a t" style="left:986.5px;top:404.0px;height:12px;line-height:12px;font-size:7px;color:#8c8c8c;">-24</div>
<div class="a " style="left:982px;top:429.5px;width:3px;height:1px;background:#8c8c8c;"></div>
<div class="a t" style="left:986.5px;top:423.5px;height:12px;line-height:12px;font-size:7px;color:#8c8c8c;">-30</div>
<div class="a " style="left:982px;top:449px;width:3px;height:1px;background:#8c8c8c;"></div>
<div class="a t" style="left:986.5px;top:443.0px;height:12px;line-height:12px;font-size:7px;color:#8c8c8c;">-36</div>
<div class="a " style="left:982px;top:468px;width:3px;height:1px;background:#8c8c8c;"></div>
<div class="a t" style="left:986.5px;top:462.0px;height:12px;line-height:12px;font-size:7px;color:#8c8c8c;">-42</div>
<div class="a " style="left:982px;top:487.5px;width:3px;height:1px;background:#8c8c8c;"></div>
<div class="a t" style="left:986.5px;top:481.5px;height:12px;line-height:12px;font-size:7px;color:#8c8c8c;">-48</div>
<div class="a " style="left:982px;top:507px;width:3px;height:1px;background:#8c8c8c;"></div>
<div class="a t" style="left:986.5px;top:501.0px;height:12px;line-height:12px;font-size:7px;color:#8c8c8c;">-54</div>
<div class="a " style="left:982px;top:524px;width:3px;height:1px;background:#8c8c8c;"></div>
<div class="a t" style="left:986.5px;top:518.0px;height:12px;line-height:12px;font-size:7px;color:#8c8c8c;">dB</div>
<svg style="left:0px;top:337px" width="10" height="11" viewBox="0 0 10 11"><circle cx="5.6" cy="4.2" r="3.1" fill="none" stroke="#b0b0b0" stroke-width="1.3"/><path d="M3.4 6.6 L0 10" stroke="#b0b0b0" stroke-width="1.5"/></svg>
<svg style="left:164px;top:337.5px" width="12" height="9.5" viewBox="0 0 12 9.5"><path d="M0 2 H2 L3 0.6 H5 L6 2 H6 L7 0.6 H9 L10 2 H12 V9.5 H0 Z" fill="#c6c6c6"/><path d="M4.6 3.6 L8.4 5.8 L4.6 8 Z" fill="#333"/><path d="M1.6 4 V8" stroke="#333" stroke-width="1"/></svg>
<svg style="left:185px;top:337.5px" width="12" height="9.5" viewBox="0 0 12 9.5"><path d="M0 2 H2 L3 0.6 H5 L6 2 H6 L7 0.6 H9 L10 2 H12 V9.5 H0 Z" fill="#c6c6c6"/><path d="M4.6 3.6 L8.4 5.8 L4.6 8 Z" fill="#333"/><path d="M1.6 4 V8" stroke="#333" stroke-width="1"/></svg>
<svg style="left:4px;top:357.5px" width="5" height="7" viewBox="0 0 5 7"><path d="M0 0 L4.6 3.5 L0 7 Z" fill="#c2c2c2"/></svg>
<svg style="left:16px;top:356.5px" width="11" height="9" viewBox="0 0 11 9"><path d="M0 0.6 H3.6 L4.6 1.8 H7 V9 H0 Z" fill="#bdbdbd"/><path d="M0 3 H11 V9 H0 Z" fill="#bdbdbd"/><path d="M9 0 L9.7 1.6 L11 2 L9.7 2.6 L9 4.2 L8.3 2.6 L7 2 L8.3 1.6 Z" fill="#d8d8d8"/></svg>
<svg style="left:4px;top:372.5px" width="5" height="7" viewBox="0 0 5 7"><path d="M0 0 L4.6 3.5 L0 7 Z" fill="#c2c2c2"/></svg>
<svg style="left:16px;top:371.5px" width="11" height="9" viewBox="0 0 11 9"><path d="M0 0.6 H3.6 L4.6 1.8 H11 V9 H0 Z" fill="#bdbdbd"/><path d="M0 3 H11 V9 H0 Z" fill="#bdbdbd"/></svg>
<svg style="left:4px;top:387.5px" width="5" height="7" viewBox="0 0 5 7"><path d="M0 0 L4.6 3.5 L0 7 Z" fill="#c2c2c2"/></svg>
<svg style="left:16px;top:386.5px" width="11" height="9" viewBox="0 0 11 9"><path d="M0 0.6 H3.6 L4.6 1.8 H11 V9 H0 Z" fill="#bdbdbd"/><path d="M0 3 H11 V9 H0 Z" fill="#bdbdbd"/></svg>
<svg style="left:4px;top:402.5px" width="5" height="7" viewBox="0 0 5 7"><path d="M0 0 L4.6 3.5 L0 7 Z" fill="#c2c2c2"/></svg>
<svg style="left:16px;top:401.5px" width="11" height="9" viewBox="0 0 11 9"><path d="M0 0.6 H3.6 L4.6 1.8 H11 V9 H0 Z" fill="#bdbdbd"/><path d="M0 3 H11 V9 H0 Z" fill="#bdbdbd"/></svg>
<svg style="left:4px;top:417.5px" width="5" height="7" viewBox="0 0 5 7"><path d="M0 0 L4.6 3.5 L0 7 Z" fill="#c2c2c2"/></svg>
<svg style="left:16px;top:416.5px" width="11" height="9" viewBox="0 0 11 9"><path d="M0 0.6 H3.6 L4.6 1.8 H11 V9 H0 Z" fill="#bdbdbd"/><path d="M0 3 H11 V9 H0 Z" fill="#bdbdbd"/></svg>
<svg style="left:4px;top:432.5px" width="5" height="7" viewBox="0 0 5 7"><path d="M0 0 L4.6 3.5 L0 7 Z" fill="#c2c2c2"/></svg>
<svg style="left:16px;top:431.5px" width="11" height="9" viewBox="0 0 11 9"><path d="M0 0.6 H3.6 L4.6 1.8 H7 V9 H0 Z" fill="#bdbdbd"/><path d="M0 3 H11 V9 H0 Z" fill="#bdbdbd"/><path d="M9 0 L9.7 1.6 L11 2 L9.7 2.6 L9 4.2 L8.3 2.6 L7 2 L8.3 1.6 Z" fill="#d8d8d8"/></svg>
<svg style="left:268px;top:519.5px" width="11" height="9" viewBox="0 0 11 9"><path d="M0 0.6 H3.6 L4.6 1.8 H11 V9 H0 Z" fill="#bdbdbd"/><path d="M0 3 H11 V9 H0 Z" fill="#bdbdbd"/></svg>
<svg style="left:287px;top:518.5px" width="8" height="10" viewBox="0 0 8 10"><path d="M0.5 2.5 H7.5 M2.6 2.3 V1 H5.4 V2.3" fill="none" stroke="#5e5e5e" stroke-width="1"/><rect x="1.2" y="3.6" width="5.6" height="5.8" fill="none" stroke="#5e5e5e" stroke-width="1"/><path d="M4 4 V9" stroke="#5e5e5e" stroke-width="1"/></svg>
<svg style="left:-1.5px;top:536px" width="12" height="9" viewBox="0 0 12 9"><ellipse cx="6" cy="5" rx="5.2" ry="3.8" fill="none" stroke="#a0a0a0" stroke-width="1.2"/><circle cx="6" cy="5" r="1.8" fill="none" stroke="#a0a0a0" stroke-width="1.2"/></svg>
<svg style="left:53.5px;top:290.05px" width="3.4" height="9.5" viewBox="0 0 3.4 9.5"><path d="M3 0.5 Q1.6 0.5 1.6 1.8 V3.6 Q1.6 4.6 0.4 4.75 Q1.6 4.9 1.6 5.9 V7.7 Q1.6 9 3 9" fill="none" stroke="#6c6c6c" stroke-width="1.5"/></svg>
<svg style="left:77.1px;top:290.05px" width="3.4" height="9.5" viewBox="0 0 3.4 9.5"><path d="M3 0.5 Q1.6 0.5 1.6 1.8 V3.6 Q1.6 4.6 0.4 4.75 Q1.6 4.9 1.6 5.9 V7.7 Q1.6 9 3 9" transform="translate(3.4 0) scale(-1 1)" fill="none" stroke="#6c6c6c" stroke-width="1.5"/></svg>
<svg style="left:106.7px;top:290.05px" width="12" height="9.5" viewBox="0 0 12 9.5"><path d="M3 0.5 Q1.6 0.5 1.6 1.8 V3.6 Q1.6 4.6 0.4 4.75 Q1.6 4.9 1.6 5.9 V7.7 Q1.6 9 3 9" fill="none" stroke="#6c6c6c" stroke-width="1.5"/><path d="M4.2 4.75 L7.8 1.8 V3.9 H11.6 V5.6 H7.8 V7.7 Z" fill="#6c6c6c"/></svg>
<svg style="left:133.3px;top:290.8px" width="10" height="8" viewBox="0 0 10 8"><path d="M0 4 L6.4 0.4 V7.6 Z" fill="#6c6c6c"/><rect x="7.8" y="0.6" width="1.8" height="6.8" fill="#6c6c6c"/></svg>
<svg style="left:159.9px;top:290.05px" width="9" height="9.5" viewBox="0 0 9 9.5"><path d="M0 0 L9 4.75 L0 9.5 Z" fill="#6c6c6c"/></svg>
<svg style="left:185.3px;top:290.8px" width="10" height="8" viewBox="0 0 10 8"><path d="M10 4 L3.6 0.4 V7.6 Z" fill="#6c6c6c"/><rect x="0.4" y="0.6" width="1.8" height="6.8" fill="#6c6c6c"/></svg>
<svg style="left:529.0px;top:290.8px" width="7" height="8" viewBox="0 0 7 8"><path d="M0 0 H7 V4.6 L3.5 8 L0 4.6 Z" fill="#b4b4b4"/></svg>
<svg style="left:558.3px;top:290.05px" width="3.4" height="9.5" viewBox="0 0 3.4 9.5"><path d="M3 0.5 Q1.6 0.5 1.6 1.8 V3.6 Q1.6 4.6 0.4 4.75 Q1.6 4.9 1.6 5.9 V7.7 Q1.6 9 3 9" fill="none" stroke="#b4b4b4" stroke-width="1.5"/></svg>
<svg style="left:581.6999999999999px;top:290.05px" width="3.4" height="9.5" viewBox="0 0 3.4 9.5"><path d="M3 0.5 Q1.6 0.5 1.6 1.8 V3.6 Q1.6 4.6 0.4 4.75 Q1.6 4.9 1.6 5.9 V7.7 Q1.6 9 3 9" transform="translate(3.4 0) scale(-1 1)" fill="none" stroke="#b4b4b4" stroke-width="1.5"/></svg>
<svg style="left:611.5px;top:290.05px" width="12" height="9.5" viewBox="0 0 12 9.5"><path d="M3 0.5 Q1.6 0.5 1.6 1.8 V3.6 Q1.6 4.6 0.4 4.75 Q1.6 4.9 1.6 5.9 V7.7 Q1.6 9 3 9" fill="none" stroke="#b4b4b4" stroke-width="1.5"/><path d="M4.2 4.75 L7.8 1.8 V3.9 H11.6 V5.6 H7.8 V7.7 Z" fill="#b4b4b4"/></svg>
<svg style="left:638.2px;top:290.8px" width="10" height="8" viewBox="0 0 10 8"><path d="M0 4 L6.4 0.4 V7.6 Z" fill="#b4b4b4"/><rect x="7.8" y="0.6" width="1.8" height="6.8" fill="#b4b4b4"/></svg>
<svg style="left:664.3px;top:290.05px" width="9" height="9.5" viewBox="0 0 9 9.5"><path d="M0 0 L9 4.75 L0 9.5 Z" fill="#b4b4b4"/></svg>
<svg style="left:689.7px;top:290.8px" width="10" height="8" viewBox="0 0 10 8"><path d="M10 4 L3.6 0.4 V7.6 Z" fill="#b4b4b4"/><rect x="0.4" y="0.6" width="1.8" height="6.8" fill="#b4b4b4"/></svg>
<svg style="left:714.7px;top:290.05px" width="12" height="9.5" viewBox="0 0 12 9.5"><g transform="translate(12 0) scale(-1 1)"><path d="M3 0.5 Q1.6 0.5 1.6 1.8 V3.6 Q1.6 4.6 0.4 4.75 Q1.6 4.9 1.6 5.9 V7.7 Q1.6 9 3 9" fill="none" stroke="#b4b4b4" stroke-width="1.5"/></g><path d="M7.8 4.75 L4.2 1.8 V3.9 H0.4 V5.6 H4.2 V7.7 Z" fill="#b4b4b4"/></svg>
<svg style="left:745.0px;top:289.8px" width="15" height="10" viewBox="0 0 15 10"><rect x="0" y="5" width="5" height="5" fill="#b4b4b4"/><rect x="10" y="5" width="5" height="5" fill="#b4b4b4"/><rect x="4.2" y="0.6" width="6.6" height="5.4" fill="none" stroke="#b4b4b4" stroke-width="1.1"/><path d="M7.5 1.6 L9.4 4 H5.6 Z" fill="#b4b4b4"/><rect x="5" y="7" width="5" height="1.2" fill="#b4b4b4"/></svg>
<svg style="left:771.0px;top:289.8px" width="15" height="10" viewBox="0 0 15 10"><rect x="0" y="5" width="5" height="5" fill="#b4b4b4"/><rect x="10" y="5" width="5" height="5" fill="#b4b4b4"/><rect x="4.2" y="0.6" width="6.6" height="5.4" fill="none" stroke="#b4b4b4" stroke-width="1.1"/><path d="M7.5 1.6 L9.4 4 H5.6 Z" fill="#b4b4b4"/><rect x="5" y="7" width="5" height="1.2" fill="#b4b4b4"/></svg>
<svg style="left:799px;top:290.3px" width="12" height="9" viewBox="0 0 12 9"><path d="M0 1.6 H3 L4 0.2 H8 L9 1.6 H12 V9 H0 Z" fill="#b4b4b4"/><circle cx="6" cy="5.2" r="2.4" fill="#262626"/><circle cx="6" cy="5.2" r="1.2" fill="#b4b4b4"/></svg>
<svg style="left:984.5px;top:291.3px" width="7" height="7" viewBox="0 0 7 7"><path d="M3.5 0 V7 M0 3.5 H7" stroke="#b4b4b4" stroke-width="1.8"/></svg>
<svg style="left:150px;top:241.5px" width="8" height="9" viewBox="0 0 8 9"><rect x="0.6" y="0.6" width="6.8" height="7.8" fill="none" stroke="#4c4c4c" stroke-width="1.2"/><path d="M0.6 4.5 H7.4 M2.4 0.6 V8.4 M5.6 0.6 V8.4" stroke="#4c4c4c" stroke-width="0.8"/></svg>
<svg style="left:168px;top:243px" width="11" height="6" viewBox="0 0 11 6"><path d="M0 3 H11 M3.4 0.6 V5.4 M5.6 0 V6 M7.8 0.6 V5.4" stroke="#3e3e3e" stroke-width="1"/></svg>
<svg style="left:471.5px;top:234.5px" width="7" height="4" viewBox="0 0 7 4"><path d="M0 0 H7 L3.5 4 Z" fill="#dcdcdc"/></svg>
<svg style="left:893.2px;top:234.5px" width="7" height="4" viewBox="0 0 7 4"><path d="M0 0 H7 L3.5 4 Z" fill="#dcdcdc"/></svg>
<svg style="left:913px;top:231px" width="11" height="11" viewBox="0 0 11 11"><path d="M4.6 4.8 L9.5 9.7" stroke="#c4c4c4" stroke-width="2.1" stroke-linecap="round"/><circle cx="3.7" cy="3.7" r="3.1" fill="#c4c4c4"/><path d="M3.9 3.9 L-0.5 -0.5" stroke="#262626" stroke-width="2.3"/></svg>
<div class="a" style="left:404px;top:267px;width:596px;height:5px;background:repeating-linear-gradient(to right,#4a4a4a 0,#4a4a4a 1px,#2a2a2a 1px,#2a2a2a 2.187px)"></div>
<div class="a" style="left:404px;top:265.5px;width:596px;height:2px;background:repeating-linear-gradient(to right,#484848 0,#484848 1px,transparent 1px,transparent 6.56px);background-position:-3.4px 0"></div>
<div class="a " style="left:453px;top:264px;width:1px;height:8px;background:#6a6a6a;"></div>
<div class="a " style="left:519px;top:264px;width:1px;height:8px;background:#6a6a6a;"></div>
<div class="a " style="left:584px;top:264px;width:1px;height:8px;background:#6a6a6a;"></div>
<div class="a " style="left:650px;top:264px;width:1px;height:8px;background:#6a6a6a;"></div>
<div class="a " style="left:716px;top:264px;width:1px;height:8px;background:#6a6a6a;"></div>
<div class="a " style="left:781px;top:264px;width:1px;height:8px;background:#6a6a6a;"></div>
<div class="a " style="left:847px;top:264px;width:1px;height:8px;background:#6a6a6a;"></div>
<div class="a " style="left:912px;top:264px;width:1px;height:8px;background:#6a6a6a;"></div>
<div class="a " style="left:978px;top:264px;width:1px;height:8px;background:#6a6a6a;"></div>
<div class="a " style="left:993.5px;top:262.5px;width:6.5px;height:8px;background:#3c9be0;"></div>
<div class="a " style="left:800.5px;top:272px;width:10.5px;height:11px;background:#3a3a3a;"></div>
<div class="a " style="left:991px;top:272px;width:9px;height:11px;background:#3a3a3a;"></div>
<div class="a " style="left:411px;top:26.5px;width:5px;height:1px;background:#b8b8b8;"></div>
<div class="a " style="left:411px;top:28.5px;width:5px;height:1px;background:#b8b8b8;"></div>
<div class="a " style="left:411px;top:30.5px;width:5px;height:1px;background:#b8b8b8;"></div>
<div class="a " style="left:69.5px;top:26.5px;width:5px;height:1px;background:#b8b8b8;"></div>
<div class="a " style="left:69.5px;top:28.5px;width:5px;height:1px;background:#b8b8b8;"></div>
<div class="a " style="left:69.5px;top:30.5px;width:5px;height:1px;background:#b8b8b8;"></div>
<div class="a " style="left:196px;top:17px;width:208px;height:346px;background:#f2f2f2;border:1px solid #cfcfcf;box-sizing:border-box;box-shadow:1px 1px 2px rgba(0,0,0,.35)"></div>
<div class="a " style="left:199px;top:41px;width:201px;height:16px;background:#91c9f7;"></div>
<div class="a t" style="left:222.5px;top:21.0px;height:12px;line-height:12px;font-size:9px;color:#1a1a1a;-webkit-text-stroke:0.2px #1a1a1a">从 <span style="letter-spacing:.45px">Typekit</span> 添加字体...</div>
<div class="a t" style="left:222.5px;top:42.5px;height:12px;line-height:12px;font-size:9px;color:#1a1a1a;-webkit-text-stroke:0.2px #1a1a1a">新建字幕(E)</div>
<svg style="left:391px;top:45.5px" width="4" height="6" viewBox="0 0 4 6"><path d="M0.6 0.5 L3.2 3 L0.6 5.5" fill="none" stroke="#666" stroke-width="0.9"/></svg>
<div class="a t" style="left:222.5px;top:64.0px;height:12px;line-height:12px;font-size:9px;color:#8c8c8c;">字体(F)</div>
<svg style="left:391px;top:67px" width="4" height="6" viewBox="0 0 4 6"><path d="M0.6 0.5 L3.2 3 L0.6 5.5" fill="none" stroke="#b8b8b8" stroke-width="0.9"/></svg>
<div class="a t" style="left:222.5px;top:81.0px;height:12px;line-height:12px;font-size:9px;color:#8c8c8c;">大小(S)</div>
<svg style="left:391px;top:84px" width="4" height="6" viewBox="0 0 4 6"><path d="M0.6 0.5 L3.2 3 L0.6 5.5" fill="none" stroke="#b8b8b8" stroke-width="0.9"/></svg>
<div class="a t" style="left:222.5px;top:97.0px;height:12px;line-height:12px;font-size:9px;color:#8c8c8c;">文字对齐(A)</div>
<svg style="left:391px;top:100px" width="4" height="6" viewBox="0 0 4 6"><path d="M0.6 0.5 L3.2 3 L0.6 5.5" fill="none" stroke="#b8b8b8" stroke-width="0.9"/></svg>
<div class="a t" style="left:222.5px;top:113.5px;height:12px;line-height:12px;font-size:9px;color:#8c8c8c;">方向(O)</div>
<svg style="left:391px;top:116.5px" width="4" height="6" viewBox="0 0 4 6"><path d="M0.6 0.5 L3.2 3 L0.6 5.5" fill="none" stroke="#b8b8b8" stroke-width="0.9"/></svg>
<div class="a t" style="left:222.5px;top:129.5px;height:12px;line-height:12px;font-size:9px;color:#8c8c8c;">自动换行(W)</div>
<div class="a t" style="left:222.5px;top:146.0px;height:12px;line-height:12px;font-size:9px;color:#8c8c8c;">制表位(T)...</div>
<div class="a t" style="right:612px;top:146px;height:12px;line-height:12px;font-size:9px;color:#8c8c8c;letter-spacing:.3px">Ctrl+Shift+T</div>
<div class="a t" style="left:222.5px;top:167.5px;height:12px;line-height:12px;font-size:9px;color:#8c8c8c;">模板(M)...</div>
<div class="a t" style="right:612px;top:167.5px;height:12px;line-height:12px;font-size:9px;color:#8c8c8c;letter-spacing:.3px">Ctrl+J</div>
<div class="a t" style="left:222.5px;top:189.0px;height:12px;line-height:12px;font-size:9px;color:#8c8c8c;">滚动/游动选项(R)...</div>
<div class="a t" style="left:222.5px;top:210.5px;height:12px;line-height:12px;font-size:9px;color:#8c8c8c;">图形(G)</div>
<svg style="left:391px;top:213.5px" width="4" height="6" viewBox="0 0 4 6"><path d="M0.6 0.5 L3.2 3 L0.6 5.5" fill="none" stroke="#b8b8b8" stroke-width="0.9"/></svg>
<div class="a t" style="left:222.5px;top:232.0px;height:12px;line-height:12px;font-size:9px;color:#8c8c8c;">变换(N)</div>
<svg style="left:391px;top:235px" width="4" height="6" viewBox="0 0 4 6"><path d="M0.6 0.5 L3.2 3 L0.6 5.5" fill="none" stroke="#b8b8b8" stroke-width="0.9"/></svg>
<div class="a t" style="left:222.5px;top:254.0px;height:12px;line-height:12px;font-size:9px;color:#8c8c8c;">选择(C)</div>
<svg style="left:391px;top:257px" width="4" height="6" viewBox="0 0 4 6"><path d="M0.6 0.5 L3.2 3 L0.6 5.5" fill="none" stroke="#b8b8b8" stroke-width="0.9"/></svg>
<div class="a t" style="left:222.5px;top:270.0px;height:12px;line-height:12px;font-size:9px;color:#8c8c8c;">排列(G)</div>
<svg style="left:391px;top:273px" width="4" height="6" viewBox="0 0 4 6"><path d="M0.6 0.5 L3.2 3 L0.6 5.5" fill="none" stroke="#b8b8b8" stroke-width="0.9"/></svg>
<div class="a t" style="left:222.5px;top:292.0px;height:12px;line-height:12px;font-size:9px;color:#8c8c8c;">位置(P)</div>
<svg style="left:391px;top:295px" width="4" height="6" viewBox="0 0 4 6"><path d="M0.6 0.5 L3.2 3 L0.6 5.5" fill="none" stroke="#b8b8b8" stroke-width="0.9"/></svg>
<div class="a t" style="left:222.5px;top:308.0px;height:12px;line-height:12px;font-size:9px;color:#8c8c8c;">对齐对象(J)</div>
<svg style="left:391px;top:311px" width="4" height="6" viewBox="0 0 4 6"><path d="M0.6 0.5 L3.2 3 L0.6 5.5" fill="none" stroke="#b8b8b8" stroke-width="0.9"/></svg>
<div class="a t" style="left:222.5px;top:324.5px;height:12px;line-height:12px;font-size:9px;color:#8c8c8c;">分布对象(B)</div>
<svg style="left:391px;top:327.5px" width="4" height="6" viewBox="0 0 4 6"><path d="M0.6 0.5 L3.2 3 L0.6 5.5" fill="none" stroke="#b8b8b8" stroke-width="0.9"/></svg>
<div class="a t" style="left:222.5px;top:346.0px;height:12px;line-height:12px;font-size:9px;color:#8c8c8c;">视图(V)</div>
<svg style="left:391px;top:349px" width="4" height="6" viewBox="0 0 4 6"><path d="M0.6 0.5 L3.2 3 L0.6 5.5" fill="none" stroke="#b8b8b8" stroke-width="0.9"/></svg>
<div class="a " style="left:222px;top:62px;width:178px;height:1px;background:#d9d9d9;"></div>
<div class="a " style="left:222px;top:163px;width:178px;height:1px;background:#d9d9d9;"></div>
<div class="a " style="left:222px;top:184px;width:178px;height:1px;background:#d9d9d9;"></div>
<div class="a " style="left:222px;top:206px;width:178px;height:1px;background:#d9d9d9;"></div>
<div class="a " style="left:222px;top:227px;width:178px;height:1px;background:#d9d9d9;"></div>
<div class="a " style="left:222px;top:249px;width:178px;height:1px;background:#d9d9d9;"></div>
<div class="a " style="left:222px;top:287px;width:178px;height:1px;background:#d9d9d9;"></div>
<div class="a " style="left:222px;top:341px;width:178px;height:1px;background:#d9d9d9;"></div>
<div class="a " style="left:401px;top:38px;width:138px;height:92px;background:#f2f2f2;border:1px solid #cfcfcf;box-sizing:border-box;box-shadow:1px 1px 2px rgba(0,0,0,.35)"></div>
<div class="a " style="left:403px;top:58px;width:133px;height:15px;background:#91c9f7;"></div>
<div class="a t" style="left:425.5px;top:42.5px;height:12px;line-height:12px;font-size:9px;color:#1a1a1a;-webkit-text-stroke:0.2px #1a1a1a">默认静态字幕(S)...</div>
<div class="a t" style="left:425.5px;top:59.0px;height:12px;line-height:12px;font-size:9px;color:#1a1a1a;-webkit-text-stroke:0.2px #1a1a1a">默认滚动字幕(R)...</div>
<div class="a t" style="left:425.5px;top:75.5px;height:12px;line-height:12px;font-size:9px;color:#1a1a1a;-webkit-text-stroke:0.2px #1a1a1a">默认游动字幕(C)...</div>
<div class="a t" style="left:425.5px;top:97.0px;height:12px;line-height:12px;font-size:9px;color:#8c8c8c;">基于当前字幕(T)...</div>
<div class="a t" style="left:425.5px;top:113.5px;height:12px;line-height:12px;font-size:9px;color:#1a1a1a;-webkit-text-stroke:0.2px #1a1a1a">基于模板(E)...</div>
<div class="a " style="left:425px;top:92px;width:111px;height:1px;background:#d9d9d9;"></div>
</body></html>
